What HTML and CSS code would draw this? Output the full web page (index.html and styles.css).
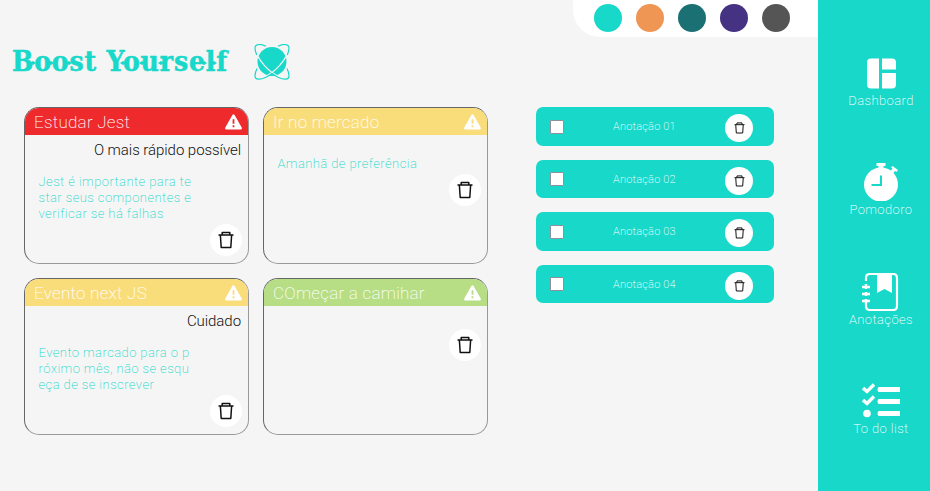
FILE: index.html
```html
<!DOCTYPE html>
<html lang="pt-BR">
<head>
<meta charset="utf-8">
<title>Boost Yourself</title>
<link rel="stylesheet" href="styles.css">
</head>
<body>
<svg class="defs" aria-hidden="true">
  <symbol id="trash" viewBox="0 0 16 18"><path d="M.5 4h15M4.200 3.800V1.400h7.600v2.400M2.400 4.500l.8 12h9.600l.8-12" fill="none" stroke="currentColor" stroke-width="1.500" stroke-linejoin="round"/></symbol>
  <symbol id="warn" viewBox="0 0 17 16"><path fill-rule="evenodd" d="M7.400 1Q8.500-.5 9.600 1l7.100 12.600q.7 1.700-1 1.900H1.300q-1.700-.2-1-1.900zM7.600 5.200v4.600h1.800V5.200zM7.600 11.300v2h1.800v-2z" fill="currentColor"/></symbol>
</svg>
<main>
  <nav class="palette"><i class="teal"></i><i class="orange"></i><i class="petrol"></i><i class="purple"></i><i class="gray"></i></nav>
  <header class="brand">
    <h1>Boost Yourself<svg class="spurs" viewBox="0 0 218 4" fill="#18d8ca"><path d="M18 2l3-2 3 2-3 2zM36 2l3-2 3 2-3 2zM54 2l3-2 3 2-3 2zM108 2l3-2 3 2-3 2zM127 2l3-2 3 2-3 2zM146 2l3-2 3 2-3 2zM189 2l3-2 3 2-3 2zM199 2l3-2 3 2-3 2z"/></svg></h1>
    <svg class="logo" viewBox="0 0 36 36" fill="none">
      <circle cx="18" cy="17.500" r="14.500" fill="#18d8ca"/>
      <path d="M3 11C7 18 12.500 24.500 18 28.500c3 2.100 6 4 9 5M33 11C29 18 23.500 24.500 18 28.500c-3 2.100-6 4-9 5" stroke="#f5f5f5" stroke-width="1.400"/>
      <path d="M12 2.200C6-.5 1 0 1 4c0 2.500.7 4.500 1.700 7M24 2.200C30-.5 35 0 35 4c0 2.500-.7 4.500-1.700 7M3 24.500C1.500 27.500 1 30 1 32c0 4 5 4 11 1.200 2-.9 4-2.200 6-3.700 2 1.500 4 2.800 6 3.700 6 2.800 11 2.800 11-1.200 0-2-.5-4.500-2-7.500" stroke="#18d8ca" stroke-width="1.200"/>
    </svg>
  </header>
  <div class="content">
    <section class="cards">
      <article class="card">
        <h2 class="red"><span>Estudar Jest</span><svg><use href="#warn"/></svg></h2>
        <h3>O mais rápido possível</h3>
        <p>Jest é importante para te<br>star seus componentes e<br>verificar se há falhas</p>
        <button><svg><use href="#trash"/></svg></button>
      </article>
      <article class="card">
        <h2 class="yellow"><span>Ir no mercado</span><svg><use href="#warn"/></svg></h2>
        <p class="alone">Amanhã de preferência</p>
        <button><svg><use href="#trash"/></svg></button>
      </article>
      <article class="card">
        <h2 class="yellow"><span>Evento next JS</span><svg><use href="#warn"/></svg></h2>
        <h3>Cuidado</h3>
        <p>Evento marcado para o p<br>róximo mês, não se esqu<br>eça de se inscrever</p>
        <button><svg><use href="#trash"/></svg></button>
      </article>
      <article class="card">
        <h2 class="green"><span>COmeçar a camihar</span><svg><use href="#warn"/></svg></h2>
        <button class="alone"><svg><use href="#trash"/></svg></button>
      </article>
    </section>
    <section class="notes">
      <div class="note"><input type="checkbox"><span>Anotação 01</span><button><svg><use href="#trash"/></svg></button></div>
      <div class="note"><input type="checkbox"><span>Anotação 02</span><button><svg><use href="#trash"/></svg></button></div>
      <div class="note"><input type="checkbox"><span>Anotação 03</span><button><svg><use href="#trash"/></svg></button></div>
      <div class="note"><input type="checkbox"><span>Anotação 04</span><button><svg><use href="#trash"/></svg></button></div>
    </section>
  </div>
</main>
<aside>
  <a><svg viewBox="0 0 38 38" fill="#fff"><path d="M9 4.500h8v30H9q-4 0-4-4v-22q0-4 4-4zM20 4.500h10q4 0 4 4v7H20zM20 19h14v11.500q0 4-4 4H20z"/></svg><span>Dashboard</span></a>
  <a><svg viewBox="0 0 38 38"><g fill="#fff"><circle cx="19" cy="21.500" r="17"/><path d="M14.500 0h9v3h-2v4h-5V3h-2zM28.500 8l2-2.500-1.500-1L30.500 3l5.500 4-1.500 2-1.500-1-2 2.500z"/></g><path d="M19 12.500v9.500H9.500" fill="none" stroke="#18d8ca" stroke-width="2"/></svg><span>Pomodoro</span></a>
  <a><svg viewBox="0 0 38 38"><path d="M4 8V5q0-4 4-4h23q4 0 4 4v28q0 4-4 4H8q-4 0-4-4v-2" fill="none" stroke="#fff" stroke-width="2.200"/><path d="M15 1h15v19l-7.500-4-7.500 4z" fill="#fff"/><path d="M0 14h8M0 21h8M0 28h8M4 11v5M4 19v4M4 26v5" stroke="#fff" stroke-width="2.400"/></svg><span>Anotações</span></a>
  <a><svg viewBox="0 0 38 38"><path d="M38 5v5H16.500q-2-2.500 0-5zM38 17v5H16.500q-2-2.500 0-5zM38 29v5H16.500q-2-2.500 0-5z" fill="#fff"/><path d="M1 6l4 3.500 7-7M1 18l4 3.500 7-7" fill="none" stroke="#fff" stroke-width="3.400"/><circle cx="5" cy="31.500" r="3.800" fill="#fff"/></svg><span>To do list</span></a>
</aside>
</body>
</html>
```
FILE: styles.css
```css
* { box-sizing: border-box; }
body { margin: 0; width: 930px; height: 491px; overflow: hidden; display: flex; background: #f5f5f5; font-family: Roboto, sans-serif; font-weight: 200; }
.defs { position: absolute; width: 0; height: 0; }
h1, h2, h3, p { margin: 0; font-weight: 200; }
main { width: 818px; display: flex; flex-direction: column; }
.palette { align-self: flex-end; width: 245px; height: 37px; padding: 4px 0 0 21px; display: flex; gap: 14px; background: #fff; border-bottom-left-radius: 27px; }
.palette i { width: 28px; height: 28px; border-radius: 50%; }
.teal { background: #18d8ca; }
.orange { background: #ef9654; }
.petrol { background: #1b7074; }
.purple { background: #453283; }
.gray { background: #555; }
.brand { height: 70px; padding: 7px 0 0 12px; display: flex; }
.brand h1 { position: relative; width: 242px; color: #18d8ca; font: bold 28px/36px "DejaVu Serif Condensed", "DejaVu Serif", serif; font-stretch: condensed; letter-spacing: .85px; -webkit-text-stroke: .5px #18d8ca; white-space: nowrap; }
.spurs { position: absolute; left: 0; top: 17px; width: 218px; height: 4px; }
.logo { width: 36px; height: 36px; }
.content { display: flex; padding-left: 24px; }
.cards { display: grid; grid-template-columns: 225px 225px; grid-auto-rows: 157px; gap: 14px; width: 512px; }
.card { border: 1px solid; border-color: #666 #999 #999 #666; border-radius: 15px; overflow: hidden; display: flex; flex-direction: column; }
.card h2 { flex: none; height: 27px; padding: 0 6px 0 9px; display: flex; align-items: center; justify-content: space-between; color: #fff; font-size: 17px; line-height: 27px; letter-spacing: .26px; }
.card h2 span { padding-top: 2px; }
.card h2 svg { width: 17px; height: 16px; }
.red { background: #ee2a2d; }
.yellow { background: #fadd7b; }
.green { background: #b7dd85; }
.card h3 { height: 39px; padding: 5px 7px 0 0; text-align: right; color: #111; font-size: 15px; font-weight: 300; line-height: 20px; letter-spacing: -.05px; }
.card p { padding-left: 13.500px; color: #18d8ca; font-size: 13px; line-height: 16px; letter-spacing: .44px; }
.card p.alone { padding-top: 21px; }
.card button { width: 32px; height: 32px; margin: 2px 6px 0 auto; padding: 0; border: 0; border-radius: 50%; background: #fff; color: #111; display: grid; place-items: center; }
.card button.alone { margin-top: 23px; }
.card button svg { width: 16px; height: 18px; }
.notes { width: 238px; display: flex; flex-direction: column; gap: 14px; }
.note { height: 38.500px; border-radius: 7px; background: #18d8ca; display: flex; align-items: center; padding: 0 21px 0 14px; }
.note input { appearance: none; width: 14px; height: 14px; margin: 1px 0 0; border: 1px solid #8f8f9d; border-radius: 1px; background: #fff; flex: none; }
.note span { flex: 1; margin: 1px 0 0 49px; color: #fff; font-size: 11px; letter-spacing: .22px; }
.note button { width: 28px; height: 28px; margin-top: 3.500px; padding: 0; border: 0; border-radius: 50%; background: #fff; color: #111; display: grid; place-items: center; }
.note button svg { width: 11px; height: 12px; }
aside { width: 112px; padding: 54px 0 0 14px; background: #18d8ca; display: flex; flex-direction: column; }
aside a { height: 109.500px; display: flex; flex-direction: column; align-items: center; color: #fff; font-size: 13px; line-height: 18px; letter-spacing: .42px; }
aside svg { width: 38px; height: 38px; }
```
